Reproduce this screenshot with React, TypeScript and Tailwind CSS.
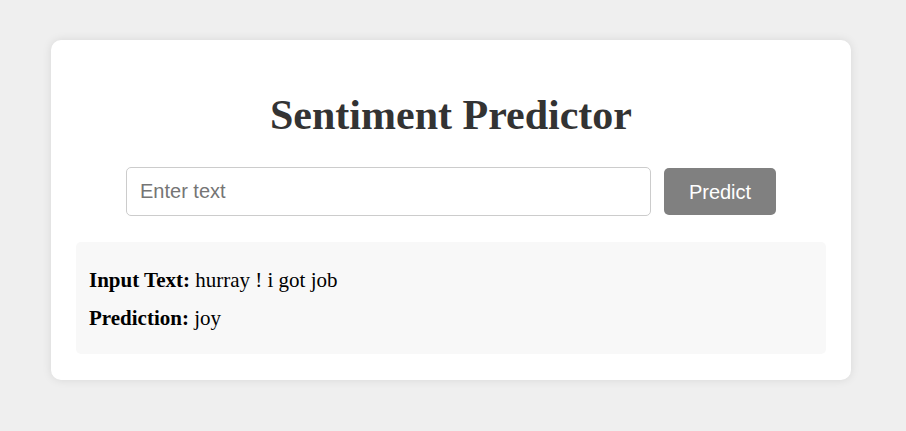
import React from "react";

export default function App() {
  return (
    <div className="min-h-[431px] w-full bg-[#efefef] pt-[40px] pb-[51px] pl-[51px] flex" style={{ fontFamily: '"Liberation Serif", serif' }}>
      <div className="w-[800px] h-[340px] bg-white rounded-[10px] shadow-[0_0_10px_rgba(0,0,0,0.1)] px-[25px] pt-[55px] pb-[26px] flex flex-col">
        <h1 className="h-[40px] flex items-center justify-center text-[42px] font-bold text-[#333] leading-none">
          Sentiment Predictor
        </h1>
        <div className="mt-[32px] flex justify-center items-center gap-[13px]">
          <input
            type="text"
            placeholder="Enter text"
            className="w-[525px] h-[49px] border border-[#ccc] rounded-[5px] px-[13px] text-[20px] text-[#333] placeholder:text-[#757575] outline-none"
            style={{ fontFamily: '"Liberation Sans", Arial, sans-serif' }}
          />
          <button
            className="w-[112px] h-[47px] bg-[#808080] text-white rounded-[5px] text-[20px]"
            style={{ fontFamily: '"Liberation Sans", Arial, sans-serif' }}
          >
            Predict
          </button>
        </div>
        <div className="mt-[26px] h-[112px] bg-[#f8f8f8] rounded-[5px] px-[13px] pt-[26px] text-[21px] text-black">
          <p className="leading-[24px]">
            <span className="font-bold">Input Text:</span> hurray ! i got job
          </p>
          <p className="leading-[24px] mt-[14px]">
            <span className="font-bold">Prediction:</span> joy
          </p>
        </div>
      </div>
    </div>
  );
}
